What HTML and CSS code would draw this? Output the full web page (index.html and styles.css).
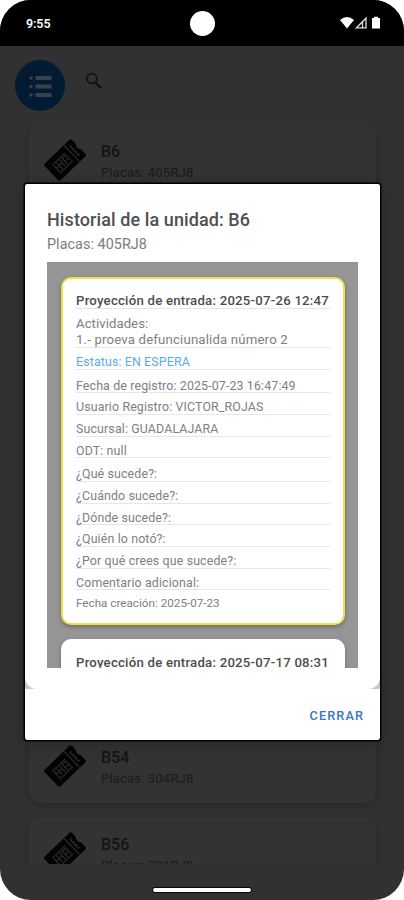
FILE: index.html
```
<!DOCTYPE html>
<html lang="es">
<head>
<meta charset="utf-8">
<title>Historial de la unidad</title>
<link rel="stylesheet" href="styles.css">
</head>
<body>
<svg class="defs" width="0" height="0" aria-hidden="true">
  <symbol id="ticket" viewBox="0 0 42 42">
    <g transform="rotate(-44 21 21)">
      <path fill="#030303" d="M4 9.500H38Q40 9.500 40 11.500V17Q38.500 17.500 38.500 20.500Q38.500 23.500 40 24V30.500Q40 32.500 38 32.500H4Q2 32.500 2 30.500V11.500Q2 9.500 4 9.500Z"/>
      <path fill="none" stroke="#2b2b2b" stroke-width="1.200" d="M30.500 10V32M8 16H26M8 27H26M9 17V26M13 17V26M9 21H17M17 17V26M20 17V26M20 18H25V22H20M25 22V26M33.500 15H36M33.500 19H36M33.500 23H36M33.500 27H36M34 15V27"/>
    </g>
  </symbol>
</svg>
<div class="phone">
  <header class="status">
    <span class="time">9:55</span>
    <span class="camera"></span>
    <svg class="signals" width="42" height="14" viewBox="0 0 42 14">
      <path fill="#fff" d="M0 4Q7 -2 14 4L7 12.500Z"/>
      <path fill="none" stroke="#ddd" stroke-width="1.300" d="M16.500 11.800L26 2.200V11.800ZM22.500 6V11.500"/>
      <path fill="#fff" d="M32 2H34V.8H38V2H40V12.500H32Z"/>
    </svg>
  </header>
  <nav class="toolbar">
    <span class="menu">
      <svg width="24" height="24" viewBox="0 0 24 24" fill="#38424c">
        <circle cx="3" cy="4" r="1.700"/><circle cx="3" cy="12.500" r="1.700"/><circle cx="3" cy="21" r="1.700"/>
        <path d="M7.500 2H23.500V6H7.500ZM7.500 10.500H23.500V14.500H7.500ZM7.500 19H23.500V23H7.500Z"/>
      </svg>
    </span>
    <svg class="search" width="18" height="18" viewBox="0 0 18 18" fill="none" stroke="#101010">
      <circle cx="6.800" cy="6.500" r="4.900" stroke-width="1.600"/><path stroke-width="2.200" d="M10.500 10.500L16.200 16"/>
    </svg>
  </nav>
  <main class="units">
    <article class="unit"><svg class="ticket"><use href="#ticket"/></svg><div><h3>B6</h3><p>Placas: 405RJ8</p></div></article>
    <article class="unit later"><svg class="ticket"><use href="#ticket"/></svg><div><h3>B54</h3><p>Placas: 304RJ8</p></div></article>
    <article class="unit"><svg class="ticket"><use href="#ticket"/></svg><div><h3>B56</h3><p>Placas: 301RJ8</p></div></article>
  </main>
  <footer class="gesture"><span></span></footer>

  <section class="dialog">
    <div class="sheet">
      <h1>Historial de la unidad: B6</h1>
      <p class="plate">Placas: 405RJ8</p>
      <div class="history">
        <article class="entry waiting">
          <h2>Proyección de entrada: 2025-07-26 12:47</h2>
          <p class="activities">Actividades:<br><span class="activity">1.- proeva defunciunalida número 2</span></p>
          <p class="state">Estatus: EN ESPERA</p>
          <p class="date">Fecha de registro: 2025-07-23 16:47:49</p>
          <p>Usuario Registro: VICTOR_ROJAS</p>
          <p>Sucursal: GUADALAJARA</p>
          <p>ODT: null</p>
          <p class="tall">¿Qué sucede?:</p>
          <p>¿Cuándo sucede?:</p>
          <p>¿Dónde sucede?:</p>
          <p>¿Quién lo notó?:</p>
          <p>¿Por qué crees que sucede?:</p>
          <p>Comentario adicional:</p>
          <p class="created">Fecha creación: 2025-07-23</p>
        </article>
        <article class="entry">
          <h2>Proyección de entrada: 2025-07-17 08:31</h2>
        </article>
      </div>
    </div>
    <div class="actions"><button>CERRAR</button></div>
  </section>
</div>
</body>
</html>
```
FILE: styles.css
```
* { box-sizing: border-box; }
body { margin: 0; background: #fff; font-family: Roboto, sans-serif; }
h1, h2, h3, p { margin: 0; white-space: nowrap; }
.defs { position: absolute; }
.phone { position: relative; display: flex; flex-direction: column; width: 404px; height: 900px; overflow: hidden; background: #313131; border-radius: 31px; }
.status { display: grid; grid-template-columns: 1fr 26px 1fr; align-items: center; height: 46px; padding: 0 22px 0 26px; background: #000; color: #fff; flex: none; }
.time { font-size: 12.5px; font-weight: 600; letter-spacing: -.1px; }
.camera { width: 25px; height: 25px; border-radius: 50%; background: #fff; margin-left: -1px; }
.signals { justify-self: end; }
.toolbar { display: flex; height: 78px; padding: 14px 15px; gap: 20px; flex: none; }
.menu { display: grid; place-items: center; width: 50px; height: 51px; border-radius: 50%; background: #031b32; }
.search { margin-top: 12px; }
.units { height: 740px; padding: 0 28px 0 29px; overflow: hidden; flex: none; }
.unit { display: flex; height: 73px; margin-bottom: 14px; padding: 15px; gap: 15px; border-radius: 12px; background: #333; box-shadow: 0 3px 8px rgba(0, 0, 0, .2); }
.later { margin-top: 533px; }
.ticket { width: 42px; height: 42px; flex: none; }
.unit h3 { padding-top: 1px; color: #141414; font-size: 16px; line-height: 24px; font-weight: 500; }
.unit p { color: #1a1a1a; font-size: 13.2px; line-height: 18px; letter-spacing: .1px; }
.gesture { display: grid; place-items: center; height: 36px; padding-top: 15px; }
.gesture span { width: 98px; height: 4px; background: #fff; border-radius: 3px; box-shadow: 0 0 0 1px #080808; }

.dialog { position: absolute; left: 25px; top: 184px; width: 355px; height: 556px; overflow: hidden; background: #fff; border-radius: 2px; }
.phone::after { content: ""; position: absolute; left: 25px; top: 184px; width: 355px; height: 556px; border-radius: 2px; box-shadow: 0 0 0 1.5px #000, 0 3px 16px rgba(0, 0, 0, .3); pointer-events: none; }
.sheet { height: 505px; padding: 24px 22px 0; border-radius: 0 0 12px 12px; background: #fff; box-shadow: 0 0 0 20px #c9c9c9; clip-path: inset(0); }
.sheet h1 { height: 24px; color: #505050; font-size: 18px; line-height: 23px; font-weight: 500; letter-spacing: .09px; }
.plate { height: 30px; color: #7c7c7c; font-size: 14.4px; line-height: 25px; letter-spacing: .04px; }
.history { height: 406px; padding: 15px 14px; overflow: hidden; background: #959595; }
.entry { display: flex; flex-direction: column; width: 284px; height: 348px; padding: 15px; border-radius: 10px; background: #fff; box-shadow: 0 2px 4px rgba(0, 0, 0, .28); }
.waiting { padding: 13px; margin-bottom: 14px; border: 2px solid #eee04b; }
.entry h2 { height: 17px; flex: none; border-bottom: 1px solid #e7e7e7; color: #4c4c4c; font-size: 13.2px; line-height: 18px; font-weight: 500; letter-spacing: .23px; }
.entry p { height: 21.7px; flex: none; border-bottom: 1px solid #e7e7e7; color: #808080; font-size: 12.4px; line-height: 28px; letter-spacing: .13px; }
.entry .activities { height: 39px; padding-top: 7px; font-size: 13.2px; line-height: 16px; letter-spacing: .05px; }
.activity { letter-spacing: .17px; }
.entry .state { height: 22px; color: #5aaaf0; line-height: 28px; }
.entry .date { height: 23.4px; line-height: 31px; }
.entry .tall { height: 23.4px; line-height: 31px; }
.entry .created { border: 0; font-size: 11.7px; line-height: 26px; letter-spacing: 0; }
.actions { display: flex; justify-content: flex-end; align-items: center; height: 51px; padding: 1px 16px 0 0; }
.actions button { padding: 0; border: 0; background: none; color: #3975c6; font: 500 12.7px Roboto, sans-serif; letter-spacing: 1.1px; }
```
